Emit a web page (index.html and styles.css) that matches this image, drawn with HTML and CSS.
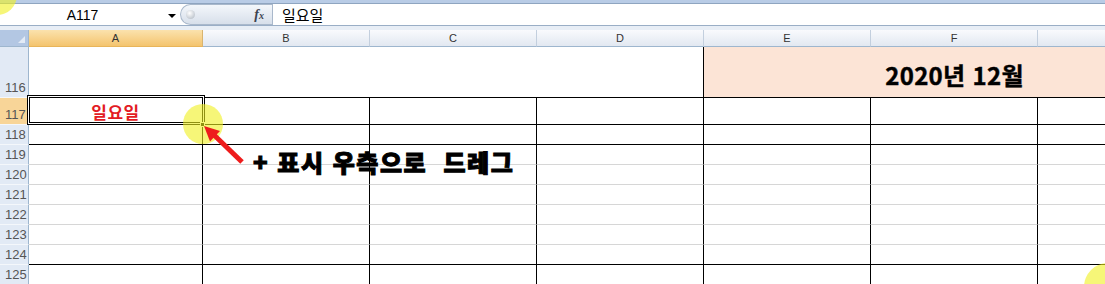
FILE: index.html
```html
<!DOCTYPE html>
<html lang="ko">
	<head>
		<meta charset="UTF-8" />
		<title>A117 - 일요일</title>
		<link rel="stylesheet" href="styles.css">
	</head>
	<body>
		<div class="page">
			<!-- formula bar -->
			<div class="topbar">
				<div class="fbar">
					<div class="namebox"><span class="name">A117</span><span class="dd"></span></div>
					<div class="fxcap"><span class="knob"></span><span class="fx">f<small>x</small></span></div>
					<div class="finput">일요일</div>
				</div>
			</div>

			<!-- sheet -->
			<div class="sheet">
				<div class="corner"></div>
				<div class="colh on">A</div>
				<div class="colh">B</div>
				<div class="colh">C</div>
				<div class="colh">D</div>
				<div class="colh">E</div>
				<div class="colh">F</div>
				<div class="colh"></div>

				<div class="rowh">116</div>
				<div class="blank"></div>
				<div class="title">2020년 12월</div>

				<div class="rowh on">117</div>
				<div class="c k day">일요일</div>
				<div class="c k"></div><div class="c k"></div><div class="c k"></div><div class="c k"></div><div class="c k"></div><div class="c k"></div>

				<div class="rowh">118</div>
				<div class="c k"></div><div class="c k"></div><div class="c k"></div><div class="c k"></div><div class="c k"></div><div class="c k"></div><div class="c k"></div>

				<div class="rowh">119</div>
				<div class="c"></div><div class="c"></div><div class="c"></div><div class="c"></div><div class="c"></div><div class="c"></div><div class="c"></div>
				<div class="rowh">120</div>
				<div class="c"></div><div class="c"></div><div class="c"></div><div class="c"></div><div class="c"></div><div class="c"></div><div class="c"></div>
				<div class="rowh">121</div>
				<div class="c"></div><div class="c"></div><div class="c"></div><div class="c"></div><div class="c"></div><div class="c"></div><div class="c"></div>
				<div class="rowh">122</div>
				<div class="c"></div><div class="c"></div><div class="c"></div><div class="c"></div><div class="c"></div><div class="c"></div><div class="c"></div>
				<div class="rowh">123</div>
				<div class="c"></div><div class="c"></div><div class="c"></div><div class="c"></div><div class="c"></div><div class="c"></div><div class="c"></div>
				<div class="rowh">124</div>
				<div class="c k"></div><div class="c k"></div><div class="c k"></div><div class="c k"></div><div class="c k"></div><div class="c k"></div><div class="c k"></div>
				<div class="rowh">125</div>
				<div class="c"></div><div class="c"></div><div class="c"></div><div class="c"></div><div class="c"></div><div class="c"></div><div class="c"></div>
			</div>

			<!-- active cell + fill handle -->
			<div class="sel"></div>
			<div class="handle"></div>

			<!-- cursor highlights and arrow -->
			<svg class="marks" width="1105" height="284" viewBox="0 0 1105 284">
				<circle cx="-3" cy="-5" r="20" fill="rgba(240,240,30,0.6)" />
				<circle cx="203" cy="124" r="20" fill="rgba(240,240,30,0.6)" />
				<circle cx="1108" cy="287" r="24" fill="rgba(240,240,30,0.6)" />
				<line x1="213" y1="134" x2="242" y2="162" stroke="#ee1c1c" stroke-width="5" />
				<polygon points="204,126 210,141.5 220,131" fill="#ee1c1c" />
			</svg>

			<div class="note">+ 표시 우측으로  드레그</div>
		</div>
	</body>
</html>
```

FILE: styles.css
```css
* {
	box-sizing: border-box;
}

body {
	margin: 0;
	background: #fff;
	font-family: "Liberation Sans", Arial, sans-serif;
}

.page {
	position: relative;
	width: 1105px;
	height: 284px;
	overflow: hidden;
}

/* formula bar */
.topbar {
	height: 30px;
	background: #e8eef6;
	border-top: 3px solid #b9cce6;
}

.fbar {
	display: flex;
	height: 23px;
	background: #fff;
	border-top: 1px solid #8fa5c0;
	border-bottom: 1px solid #9aaec6;
}

.namebox {
	width: 176px;
	display: flex;
	align-items: center;
	font-size: 14px;
	color: #000;
}

.name {
	width: 163px;
	text-align: center;
	padding-left: 2px;
}

.dd {
	width: 0;
	height: 0;
	margin-left: 5px;
	margin-top: 2px;
	border-left: 4px solid transparent;
	border-right: 4px solid transparent;
	border-top: 4px solid #000;
}

.fxcap {
	width: 92px;
	margin-left: 4px;
	display: flex;
	align-items: center;
	border: 1px solid #a9b8cb;
	border-right: 0;
	border-radius: 11px 0 0 11px;
	background: linear-gradient(#f4f7fb, #d7dfea);
}

.knob {
	width: 9px;
	height: 9px;
	margin-left: 5px;
	border-radius: 50%;
	background: radial-gradient(circle at 40% 35%, #fff, #aab3be);
}

.fx {
	margin-left: auto;
	margin-right: 8px;
	font-family: "Liberation Serif", serif;
	font-style: italic;
	font-weight: bold;
	font-size: 14px;
	color: #3c4350;
}

.fx small {
	font-size: 10px;
}

.finput {
	flex: 1;
	border-left: 1px solid #a9b8cb;
	padding-left: 9px;
	font-family: "Noto Sans CJK KR", sans-serif;
	font-size: 15px;
	line-height: 21px;
	color: #000;
}

/* sheet grid */
.sheet {
	display: grid;
	grid-template-columns: 29px 174px repeat(6, 167px);
	grid-template-rows: 17px 51px 27px 20px repeat(7, 20px);
	width: 1204px;
}

.corner {
	position: relative;
	background: #b3c7e3;
	border-right: 1px solid #9eb6ce;
	border-bottom: 1px solid #9eb6ce;
}

.corner::after {
	content: "";
	position: absolute;
	right: 3px;
	bottom: 3px;
	border-left: 7px solid transparent;
	border-bottom: 7px solid #e3ebf6;
}

.colh {
	background: linear-gradient(#f9fafd, #e2e8f1);
	border-right: 1px solid #c3cfde;
	border-bottom: 1px solid #9eb6ce;
	text-align: center;
	font-size: 11px;
	line-height: 16px;
	color: #333;
}

.colh.on {
	background: linear-gradient(#fbe2ad, #f4c46e);
	border-right-color: #d9b46f;
	border-bottom-color: #e8b55a;
}

.rowh {
	display: flex;
	align-items: flex-end;
	padding: 0 0 2px 5px;
	background: #e2eaf5;
	border-right: 1px solid #9eb6ce;
	border-bottom: 1px solid #f4f7fb;
	font-size: 13px;
	line-height: 14px;
	color: #555;
}

.rowh.on {
	background: #f8d598;
}

.c {
	border-right: 1px solid #000;
	border-bottom: 1px solid #d6d6d6;
}

.c.k {
	border-bottom-color: #000;
}

.blank {
	grid-column: span 4;
	border-right: 1px solid #000;
	border-bottom: 1px solid #000;
}

.title {
	grid-column: span 3;
	display: flex;
	align-items: center;
	justify-content: center;
	padding-top: 4px;
	background: #fce4d6;
	border-bottom: 1px solid #000;
	font-family: "Noto Sans CJK KR", sans-serif;
	font-weight: bold;
	font-size: 24px;
	letter-spacing: 0.3px;
	color: #000;
	-webkit-text-stroke: 0.4px #000;
}

.day {
	display: flex;
	align-items: center;
	justify-content: center;
	font-family: "Noto Sans CJK KR", sans-serif;
	font-weight: bold;
	font-size: 17px;
	letter-spacing: 0.5px;
	color: #e31b23;
}

/* overlays */
.sel {
	position: absolute;
	left: 27px;
	top: 95px;
	width: 178px;
	height: 30px;
	border: 1px solid #000;
	box-shadow: inset 0 0 0 1px #fff, inset 0 0 0 2px #000;
}

.handle {
	position: absolute;
	left: 200px;
	top: 122px;
	width: 5px;
	height: 5px;
	background: #000;
	border: 1px solid #fff;
}

.marks {
	position: absolute;
	left: 0;
	top: 0;
	pointer-events: none;
}

.note {
	position: absolute;
	left: 253px;
	top: 150px;
	white-space: pre;
	font-family: "Noto Sans CJK KR", sans-serif;
	font-weight: 900;
	font-size: 24px;
	line-height: 24px;
	letter-spacing: 1.5px;
	color: #000;
	-webkit-text-stroke: 1px #000;
}
```
